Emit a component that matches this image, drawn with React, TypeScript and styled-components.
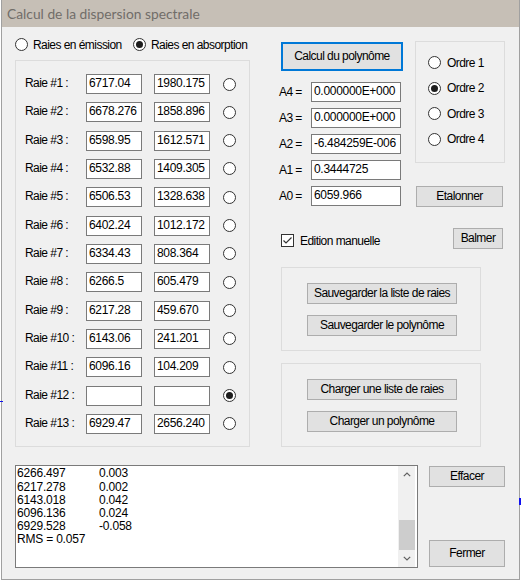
import React from "react";
import styled, { createGlobalStyle } from "styled-components";

const GlobalStyle = createGlobalStyle`
  html, body { margin: 0; padding: 0; background: #ffffff; }
  body { font-family: "Liberation Sans", Arial, sans-serif; }
  * { box-sizing: border-box; }
`;

const Stage = styled.div`
  position: relative;
  width: 521px;
  height: 581px;
`;

const Window = styled.div`
  margin-left: 1px;
  width: 519px;
  height: 580px;
  border: 1px solid #a0a0a0;
  border-top: none;
  background: #f0f0f0;
  display: flex;
  flex-direction: column;
`;

const TitleBar = styled.div`
  height: 27px;
  flex: none;
  background: #c6bfb6;
  padding-left: 5px;
  font-family: Lato, "Open Sans", sans-serif;
  font-size: 13.8px;
  line-height: 27px;
  color: #716d69;
  white-space: nowrap;
`;

const Content = styled.div`
  display: flex;
  flex-direction: column;
  padding-left: 13px;
`;

const Upper = styled.div`
  display: flex;
  align-items: flex-start;
`;

const LeftCol = styled.div`
  width: 235px;
  display: flex;
  flex-direction: column;
`;

const ModeRow = styled.div`
  margin-top: 11px;
  height: 13px;
  display: flex;
  align-items: center;
`;

const RadioItem = styled.div<{ $w?: number; $gap?: number }>`
  display: flex;
  align-items: center;
  gap: ${(p) => p.$gap ?? 5}px;
  height: 13px;
  ${(p) => (p.$w ? `width: ${p.$w}px;` : "")}
`;

const RadioCircle = styled.span<{ $checked?: boolean }>`
  flex: none;
  width: 13px;
  height: 13px;
  border-radius: 50%;
  border: 1px solid #333333;
  background: #ffffff;
  display: inline-flex;
  align-items: center;
  justify-content: center;
  &::after {
    content: "";
    width: 7px;
    height: 7px;
    border-radius: 50%;
    background: ${(p) => (p.$checked ? "#1c1c1c" : "transparent")};
  }
`;

const Label = styled.span`
  font-size: 12px;
  letter-spacing: -0.55px;
  color: #000000;
  white-space: nowrap;
  line-height: 14px;
`;

const GroupBox = styled.div<{ $h: number; $w?: number }>`
  border: 1px solid #dcdcdc;
  height: ${(p) => p.$h}px;
  ${(p) => (p.$w ? `width: ${p.$w}px;` : "")}
  display: flex;
  flex-direction: column;
`;

const LinesGroup = styled(GroupBox)`
  margin-top: 9px;
  padding: 13px 0 0 8px;
  gap: 8.33px;
`;

const LineRow = styled.div`
  display: flex;
  align-items: center;
  height: 20px;
`;

const LineLabel = styled(Label)`
  width: 62px;
  padding-left: 1px;
  margin-top: -2px;
`;

const TextBox = styled.div<{ $w: number }>`
  flex: none;
  width: ${(p) => p.$w}px;
  height: 20px;
  background: #ffffff;
  border: 1px solid #7a7a7a;
  padding-left: 2px;
  font-size: 12px;
  line-height: 16px;
  color: #000000;
  white-space: nowrap;
  overflow: hidden;
  letter-spacing: -0.3px;
`;

const SecondBox = styled(TextBox)`
  margin-left: 12px;
`;

const LineRadio = styled(RadioCircle)`
  margin-left: 13px;
`;

const RightCol = styled.div`
  margin-left: 29px;
  width: 227px;
  display: flex;
  flex-direction: column;
`;

const TopRight = styled.div`
  display: flex;
  align-items: flex-start;
`;

const CoeffCol = styled.div`
  width: 136px;
  display: flex;
  flex-direction: column;
`;

const Button = styled.div<{ $w: number; $h: number; $focused?: boolean }>`
  flex: none;
  width: ${(p) => p.$w}px;
  height: ${(p) => p.$h}px;
  background: #e1e1e1;
  border: ${(p) => (p.$focused ? "2px solid #0078d7" : "1px solid #adadad")};
  display: flex;
  align-items: center;
  justify-content: center;
  font-size: 12px;
  letter-spacing: -0.55px;
  color: #000000;
  white-space: nowrap;
  padding-bottom: 1px;
`;

const CalcButton = styled(Button)`
  margin: 15px 0 0 2px;
`;

const CoeffList = styled.div`
  margin-top: 11px;
  display: flex;
  flex-direction: column;
  gap: 6px;
`;

const CoeffRow = styled.div`
  display: flex;
  align-items: center;
  height: 20px;
`;

const CoeffLabel = styled(Label)`
  width: 32px;
  margin-top: -1px;
`;

const RightSub = styled.div`
  width: 90px;
  display: flex;
  flex-direction: column;
`;

const OrderGroup = styled(GroupBox)`
  margin-top: 14px;
  padding: 14px 0 0 12px;
  gap: 12.5px;
`;

const EtalonButton = styled(Button)`
  margin: 23px 0 0 1px;
`;

const EditRow = styled.div`
  margin-top: 21px;
  display: flex;
  justify-content: space-between;
  align-items: flex-start;
  padding: 0 3px 0 2px;
`;

const CheckItem = styled.div`
  margin-top: 6px;
  display: flex;
  align-items: center;
  gap: 6px;
  height: 13px;
`;

const CheckBoxSquare = styled.span`
  flex: none;
  width: 13px;
  height: 13px;
  border: 1px solid #333333;
  background: #ffffff;
  display: inline-flex;
  align-items: center;
  justify-content: center;
`;

const ActionGroup = styled(GroupBox)<{ $top: number }>`
  margin: ${(p) => p.$top}px 0 0 2px;
  padding: 15px 0 0 25px;
  gap: 11px;
`;

const Bottom = styled.div`
  margin-top: 18px;
  display: flex;
  align-items: flex-start;
`;

const LogBox = styled.div`
  width: 403px;
  height: 103px;
  background: #ffffff;
  border: 1px solid #7a7a7a;
  display: flex;
`;

const LogText = styled.div`
  flex: 1;
  padding: 1.4px 0 0 1px;
  font-size: 12px;
  line-height: 13.2px;
  color: #000000;
  letter-spacing: -0.2px;
`;

const LogLine = styled.div`
  display: flex;
  white-space: nowrap;
`;

const LogCell = styled.span`
  width: 82px;
`;

const ScrollBar = styled.div`
  width: 17px;
  margin-right: 2px;
  background: #f0f0f0;
  display: flex;
  flex-direction: column;
`;

const ScrollArrow = styled.div`
  height: 17px;
  flex: none;
  display: flex;
  align-items: center;
  justify-content: center;
`;

const ScrollTrack = styled.div`
  flex: 1;
  display: flex;
  flex-direction: column;
  justify-content: flex-end;
`;

const ScrollThumb = styled.div`
  height: 30px;
  margin-left: 1px;
  background: #cdcdcd;
`;

const BottomButtons = styled.div`
  margin-left: 11px;
  height: 102px;
  display: flex;
  flex-direction: column;
  justify-content: space-between;
  padding-top: 1px;
`;

const Speck = styled.span<{ $x: number; $y: number; $w: number; $h: number }>`
  position: absolute;
  left: ${(p) => p.$x}px;
  top: ${(p) => p.$y}px;
  width: ${(p) => p.$w}px;
  height: ${(p) => p.$h}px;
  background: #1010f0;
`;

const lines: [string, string, string][] = [
  ["Raie #1 :", "6717.04", "1980.175"],
  ["Raie #2 :", "6678.276", "1858.896"],
  ["Raie #3 :", "6598.95", "1612.571"],
  ["Raie #4 :", "6532.88", "1409.305"],
  ["Raie #5 :", "6506.53", "1328.638"],
  ["Raie #6 :", "6402.24", "1012.172"],
  ["Raie #7 :", "6334.43", "808.364"],
  ["Raie #8 :", "6266.5", "605.479"],
  ["Raie #9 :", "6217.28", "459.670"],
  ["Raie #10 :", "6143.06", "241.201"],
  ["Raie #11 :", "6096.16", "104.209"],
  ["Raie #12 :", "", ""],
  ["Raie #13 :", "6929.47", "2656.240"],
];

const coeffs: [string, string][] = [
  ["A4 =", "0.000000E+000"],
  ["A3 =", "0.000000E+000"],
  ["A2 =", "-6.484259E-006"],
  ["A1 =", "0.3444725"],
  ["A0 =", "6059.966"],
];

const log: [string, string][] = [
  ["6266.497", "0.003"],
  ["6217.278", "0.002"],
  ["6143.018", "0.042"],
  ["6096.136", "0.024"],
  ["6929.528", "-0.058"],
  ["RMS = 0.057", ""],
];

const Chevron = ({ up }: { up?: boolean }) => (
  <svg width="8" height="5" viewBox="0 0 8 5">
    <polyline
      points={up ? "0.8,4.2 4,1 7.2,4.2" : "0.8,0.8 4,4 7.2,0.8"}
      fill="none"
      stroke="#606060"
      strokeWidth="1.2"
    />
  </svg>
);

export default function App() {
  return (
    <Stage>
      <GlobalStyle />
      <Window>
        <TitleBar>Calcul de la dispersion spectrale</TitleBar>
        <Content>
          <Upper>
            <LeftCol>
              <ModeRow>
                <RadioItem $w={118}>
                  <RadioCircle />
                  <Label>Raies en émission</Label>
                </RadioItem>
                <RadioItem>
                  <RadioCircle $checked />
                  <Label>Raies en absorption</Label>
                </RadioItem>
              </ModeRow>
              <LinesGroup $h={387}>
                {lines.map(([name, a, b], i) => (
                  <LineRow key={name}>
                    <LineLabel>{name}</LineLabel>
                    <TextBox $w={56}>{a}</TextBox>
                    <SecondBox $w={56}>{b}</SecondBox>
                    <LineRadio $checked={i === 11} />
                  </LineRow>
                ))}
              </LinesGroup>
            </LeftCol>
            <RightCol>
              <TopRight>
                <CoeffCol>
                  <CalcButton $w={122} $h={29} $focused>
                    Calcul du polynôme
                  </CalcButton>
                  <CoeffList>
                    {coeffs.map(([l, v]) => (
                      <CoeffRow key={l}>
                        <CoeffLabel>{l}</CoeffLabel>
                        <TextBox $w={90}>{v}</TextBox>
                      </CoeffRow>
                    ))}
                  </CoeffList>
                </CoeffCol>
                <RightSub>
                  <OrderGroup $h={122}>
                    {[1, 2, 3, 4].map((n) => (
                      <RadioItem key={n} $gap={6}>
                        <RadioCircle $checked={n === 2} />
                        <Label>Ordre {n}</Label>
                      </RadioItem>
                    ))}
                  </OrderGroup>
                  <EtalonButton $w={87} $h={21}>
                    Etalonner
                  </EtalonButton>
                </RightSub>
              </TopRight>
              <EditRow>
                <CheckItem>
                  <CheckBoxSquare>
                    <svg width="11" height="11" viewBox="0 0 11 11">
                      <polyline
                        points="1.5,5.5 4,8 9.5,2.5"
                        fill="none"
                        stroke="#333333"
                        strokeWidth="1.2"
                      />
                    </svg>
                  </CheckBoxSquare>
                  <Label>Edition manuelle</Label>
                </CheckItem>
                <Button $w={50} $h={21}>
                  Balmer
                </Button>
              </EditRow>
              <ActionGroup $h={84} $w={200} $top={18}>
                <Button $w={150} $h={21}>
                  Sauvegarder la liste de raies
                </Button>
                <Button $w={150} $h={21}>
                  Sauvegarder le polynôme
                </Button>
              </ActionGroup>
              <ActionGroup $h={84} $w={200} $top={12}>
                <Button $w={150} $h={21}>
                  Charger une liste de raies
                </Button>
                <Button $w={150} $h={21}>
                  Charger un polynôme
                </Button>
              </ActionGroup>
            </RightCol>
          </Upper>
          <Bottom>
            <LogBox>
              <LogText>
                {log.map(([a, b], i) => (
                  <LogLine key={i}>
                    <LogCell>{a}</LogCell>
                    <span>{b}</span>
                  </LogLine>
                ))}
              </LogText>
              <ScrollBar>
                <ScrollArrow>
                  <Chevron up />
                </ScrollArrow>
                <ScrollTrack>
                  <ScrollThumb />
                </ScrollTrack>
                <ScrollArrow>
                  <Chevron />
                </ScrollArrow>
              </ScrollBar>
            </LogBox>
            <BottomButtons>
              <Button $w={76} $h={21}>
                Effacer
              </Button>
              <Button $w={76} $h={27}>
                Fermer
              </Button>
            </BottomButtons>
          </Bottom>
        </Content>
      </Window>
      <Speck $x={0} $y={401} $w={3} $h={1} />
      <Speck $x={519} $y={498} $w={2} $h={7} />
    </Stage>
  );
}
